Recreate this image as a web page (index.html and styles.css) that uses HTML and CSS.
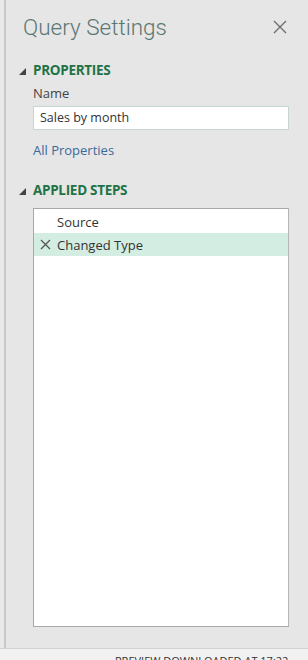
FILE: index.html
```html
<!DOCTYPE html>
<html>
<head>
<meta charset="utf-8">
<link rel="stylesheet" href="styles.css">
</head>
<body>
<div class="app">
  <div class="main">
    <div class="edge"></div>
    <div class="panel">
      <div class="header">
        <h1 class="title">Query Settings</h1>
        <svg class="close" width="14" height="14" viewBox="0 0 14 14"><path d="M1 1L13 13M13 1L1 13" stroke="#6b6b6b" stroke-width="1.3" fill="none"/></svg>
      </div>
      <div class="section-head">
        <svg class="tri" width="7" height="7" viewBox="0 0 7 7"><path d="M7 0V7H0Z" fill="#444"/></svg>
        <span>PROPERTIES</span>
      </div>
      <div class="label">Name</div>
      <div class="input">Sales by month</div>
      <div class="link">All Properties</div>
      <div class="section-head steps-head">
        <svg class="tri" width="7" height="7" viewBox="0 0 7 7"><path d="M7 0V7H0Z" fill="#444"/></svg>
        <span>APPLIED STEPS</span>
      </div>
      <div class="steps">
        <div class="step"><span class="icon"></span><span>Source</span></div>
        <div class="step selected"><span class="icon"><svg width="11" height="11" viewBox="0 0 11 11"><path d="M1 1L10 10M10 1L1 10" stroke="#555" stroke-width="1.3" fill="none"/></svg></span><span>Changed Type</span></div>
      </div>
    </div>
  </div>
  <div class="status">PREVIEW DOWNLOADED AT 17:22</div>
</div>
</body>
</html>
```
FILE: styles.css
```css
html, body {
  margin: 0;
  padding: 0;
}
body {
  width: 308px;
  height: 660px;
  overflow: hidden;
  background: #e6e6e6;
  font-family: "Open Sans", "Noto Sans", sans-serif;
}
.app {
  display: flex;
  flex-direction: column;
  height: 660px;
}
.main {
  display: flex;
  height: 649px;
  border-bottom: 1px solid #d2d2d2;
  box-sizing: border-box;
}
.edge {
  width: 4px;
  background: #e9e9e9;
  border-right: 2px solid #c9c9c9;
}
.panel {
  flex: 1;
  display: flex;
  flex-direction: column;
  padding: 0 19px 0 13px;
  background: #e6e6e6;
}
.header {
  display: flex;
  justify-content: space-between;
  align-items: center;
  height: 56px;
  padding-left: 4px;
}
.title {
  margin: 0;
  font-family: Roboto, "Open Sans", sans-serif;
  font-weight: 300;
  font-size: 22.5px;
  color: #5b7773;
  letter-spacing: 0;
  position: relative;
  top: -1px;
}
.close {
  margin-right: 2px;
  position: relative;
  top: -1px;
}
.section-head {
  display: flex;
  align-items: center;
  gap: 7px;
  height: 18px;
  margin-top: 5px;
  font-family: "Open Sans", sans-serif;
  font-weight: 700;
  font-size: 13.5px;
  color: #217346;
  letter-spacing: -0.3px;
}
.section-head .tri {
  position: relative;
  top: 1px;
}
.label {
  margin-left: 14px;
  margin-top: 6px;
  font-size: 13px;
  color: #444;
  height: 17px;
  line-height: 17px;
}
.input {
  margin-left: 14px;
  margin-top: 4px;
  height: 24px;
  box-sizing: border-box;
  background: #fff;
  border: 1px solid #c5d6d3;
  padding-left: 6px;
  font-size: 12.5px;
  line-height: 22px;
  color: #333;
}
.link {
  margin-left: 14px;
  margin-top: 12px;
  font-size: 13px;
  color: #3b6a99;
  height: 17px;
  line-height: 17px;
}
.steps-head {
  margin-top: 22px;
}
.steps {
  margin-left: 14px;
  margin-top: 9px;
  height: 419px;
  box-sizing: border-box;
  background: #fff;
  border: 1px solid #a9a9a9;
  border-right-color: #b5b5b5;
  padding-top: 1px;
}
.step {
  display: flex;
  align-items: center;
  height: 23px;
  font-size: 13px;
  color: #333;
}
.step .icon {
  width: 23px;
  display: flex;
  justify-content: center;
  align-items: center;
}
.step.selected {
  background: #d4ede2;
}
.status {
  flex: 1;
  background: #f1f1f1;
  font-size: 11px;
  color: #333;
  padding-left: 115px;
  line-height: 14px;
  padding-top: 5px;
  white-space: nowrap;
  overflow: hidden;
}
```
